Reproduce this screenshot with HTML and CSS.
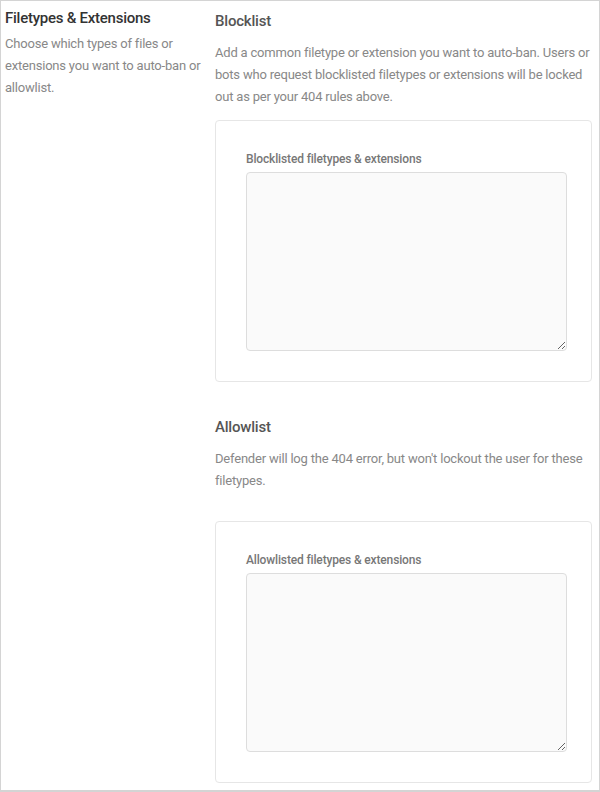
FILE: index.html
```html
<!DOCTYPE html>
<html>
<head>
<meta charset="utf-8">
<link rel="stylesheet" href="styles.css">
</head>
<body>
<div class="frame">
  <div class="side">
    <h2 class="side-title">Filetypes &amp; Extensions</h2>
    <p class="side-desc">Choose which types of files or extensions you want to auto-ban or allowlist.</p>
  </div>
  <div class="main">
    <section class="block">
      <h3 class="block-title">Blocklist</h3>
      <p class="block-desc">Add a common filetype or extension you want to auto-ban. Users or bots who request blocklisted filetypes or extensions will be locked out as per your 404 rules above.</p>
      <div class="card">
        <label class="field-label">Blocklisted filetypes &amp; extensions</label>
        <textarea class="field"></textarea>
      </div>
    </section>
    <section class="block block-second">
      <h3 class="block-title">Allowlist</h3>
      <p class="block-desc">Defender will log the 404 error, but won't lockout the user for these filetypes.</p>
      <div class="card">
        <label class="field-label">Allowlisted filetypes &amp; extensions</label>
        <textarea class="field"></textarea>
      </div>
    </section>
  </div>
</div>
</body>
</html>
```
FILE: styles.css
```css
* { box-sizing: border-box; }
html, body { margin: 0; padding: 0; background: #fff; }
body { font-family: Roboto, "Liberation Sans", Arial, sans-serif; }
.frame {
  width: 600px;
  height: 792px;
  border: 1px solid #d4d4d4;
  border-bottom-width: 2px;
  display: flex;
  overflow: hidden;
}
.side {
  width: 214px;
  padding: 6px 10px 0 4px;
  flex-shrink: 0;
}
.side-title {
  margin: 0;
  font-size: 15px;
  line-height: 22px;
  font-weight: 500;
  color: #333;
  letter-spacing: -0.25px;
}
.side-desc {
  margin: 4px 0 0;
  font-size: 13px;
  line-height: 22px;
  color: #888;
  letter-spacing: -0.2px;
}
.main {
  width: 377px;
  padding-top: 9px;
}
.block-title {
  margin: 0;
  font-size: 15px;
  line-height: 22px;
  font-weight: 500;
  color: #555;
  letter-spacing: -0.2px;
}
.block-desc {
  margin: 10px 0 0;
  font-size: 13px;
  line-height: 22px;
  color: #888;
  letter-spacing: -0.2px;
}
.card {
  margin-top: 12px;
  border: 1px solid #e6e6e6;
  border-radius: 4px;
  padding: 30px 24px 30px 30px;
  display: flex;
  flex-direction: column;
}
.block-second { margin-top: 34px; }
.block-second .card { margin-top: 29px; }
.field-label {
  font-size: 12px;
  line-height: 16px;
  font-weight: 500;
  color: #777;
  margin-bottom: 5px;
  letter-spacing: -0.15px;
}
.field {
  display: block;
  width: 100%;
  height: 179px;
  margin: 0;
  background: #fafafa;
  border: 1px solid #ddd;
  border-radius: 4px;
  resize: vertical;
  font-family: inherit;
}
```
